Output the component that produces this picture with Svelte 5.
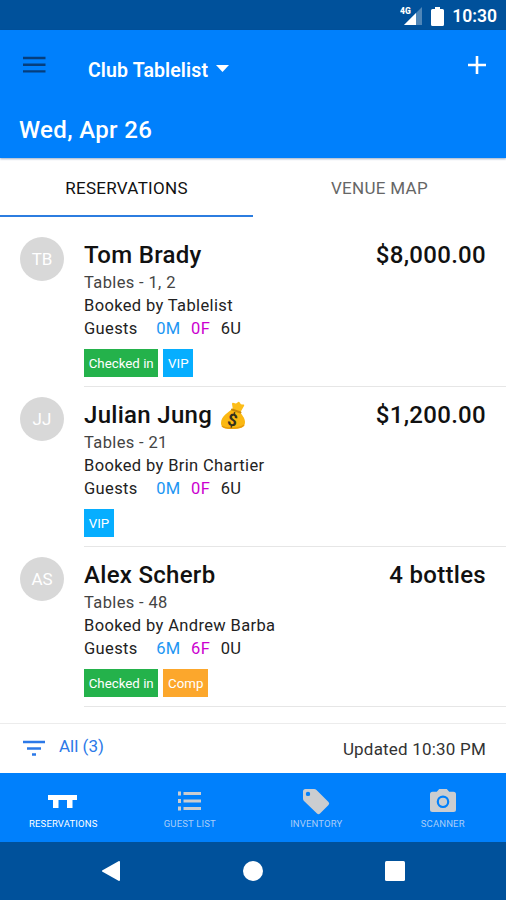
<script lang="ts">
    type Tag = { label: string; kind: string };
    type Reservation = {
        initials: string;
        name: string;
        bonus?: boolean;
        tables: string;
        bookedBy: string;
        guests: { m: number; f: number; u: number };
        amount: string;
        tags: Tag[];
    };

    const checkedIn: Tag = { label: 'Checked in', kind: 'checked' };
    const vip: Tag = { label: 'VIP', kind: 'vip' };
    const comp: Tag = { label: 'Comp', kind: 'comp' };

    const reservations: Reservation[] = [
        {
            initials: 'TB',
            name: 'Tom Brady',
            tables: '1, 2',
            bookedBy: 'Tablelist',
            guests: { m: 0, f: 0, u: 6 },
            amount: '$8,000.00',
            tags: [checkedIn, vip]
        },
        {
            initials: 'JJ',
            name: 'Julian Jung',
            bonus: true,
            tables: '21',
            bookedBy: 'Brin Chartier',
            guests: { m: 0, f: 0, u: 6 },
            amount: '$1,200.00',
            tags: [vip]
        },
        {
            initials: 'AS',
            name: 'Alex Scherb',
            tables: '48',
            bookedBy: 'Andrew Barba',
            guests: { m: 6, f: 6, u: 0 },
            amount: '4 bottles',
            tags: [checkedIn, comp]
        }
    ];

    const tabs = ['RESERVATIONS', 'VENUE MAP'];
    const sections = ['RESERVATIONS', 'GUEST LIST', 'INVENTORY', 'SCANNER'];

    let activeTab = $state(0);
    let activeSection = $state(0);
</script>

<div class="screen">
    <div class="status-bar">
        <svg class="signal" width="23" height="20" viewBox="0 0 23 20">
            <path d="M22 1V19H4Z" fill="#4f86b8" />
            <path d="M16 7V19H4Z" fill="#fff" />
            <text x="0" y="8" class="network">4G</text>
        </svg>
        <svg class="battery" width="13" height="19" viewBox="0 0 13 19">
            <path d="M4 0H9V2H11.5Q13 2 13 3.5V17.5Q13 19 11.5 19H1.5Q0 19 0 17.5V3.5Q0 2 1.5 2H4Z" fill="#fff" />
        </svg>
        <span class="clock">10:30</span>
    </div>

    <header>
        <div class="toolbar">
            <button class="menu" aria-label="Menu">
                <svg width="24" height="18" viewBox="0 0 24 18">
                    <path d="M1 2H23.5M1 8.7H23.5M1 15.4H23.5" stroke="#063e7c" stroke-width="2.4" />
                </svg>
            </button>
            <button class="venue">
                <span>Club Tablelist</span>
                <svg width="13" height="7" viewBox="0 0 13 7">
                    <path d="M0 0H13L6.5 7Z" fill="#fff" />
                </svg>
            </button>
            <button class="add" aria-label="Add reservation">
                <svg width="18" height="18" viewBox="0 0 18 18">
                    <path d="M9 0V18M0 9H18" stroke="#fff" stroke-width="2.6" />
                </svg>
            </button>
        </div>
        <div class="date">Wed, Apr 26</div>
    </header>

    <nav class="tabs">
        {#each tabs as tab, i}
            <button class:active={activeTab === i} onclick={() => (activeTab = i)}>{tab}</button>
        {/each}
    </nav>

    <main>
        {#each reservations as r}
            <article>
                <div class="avatar">{r.initials}</div>
                <div class="body">
                    <div class="title">
                        <h2>{r.name}</h2>
                        {#if r.bonus}
                            <!-- Money bag -->
                            <svg width="26" height="29" viewBox="0 0 26 29">
                                <path d="M13 9L12 3Q12 1 14 2Q16 3 17.5 1.5Q19 0 20 2Q21 4 23 3.5Q25 3 24 5L20 12Z" fill="#fcbd19" />
                                <path d="M12 8C9 11 1 15 1 22C1 27 5 28 12 28C20 28 25 27 25 21C25 17 22 14 20 11Z" fill="#fbb812" />
                                <path d="M12 8.5L20.5 11.5" stroke="#c98a08" stroke-width="2" stroke-linecap="round" />
                                <path d="M2 25C5 28 20 28 24 24" fill="none" stroke="#e79a0b" stroke-width="1.5" />
                                <text x="12.5" y="25" text-anchor="middle" class="dollar" transform="rotate(12 12.5 19)">$</text>
                            </svg>
                        {/if}
                        <span class="amount">{r.amount}</span>
                    </div>
                    <p class="tables">Tables - {r.tables}</p>
                    <p>Booked by {r.bookedBy}</p>
                    <p class="guests">
                        <span class="label">Guests</span>
                        <span class="male">{r.guests.m}M</span>
                        <span class="female">{r.guests.f}F</span>
                        <span>{r.guests.u}U</span>
                    </p>
                    <div class="tags">
                        {#each r.tags as tag}
                            <span class="tag {tag.kind}">{tag.label}</span>
                        {/each}
                    </div>
                </div>
            </article>
        {/each}
    </main>

    <div class="filter-bar">
        <button class="filter">
            <svg width="24" height="17" viewBox="0 0 24 17">
                <path d="M1 2H23M5 8.5H19M10 14.5H14" stroke="#2c79e8" stroke-width="2.4" />
            </svg>
            <span>All (3)</span>
        </button>
        <span class="updated">Updated 10:30 PM</span>
    </div>

    <nav class="sections">
        {#each sections as section, i}
            <button class:active={activeSection === i} onclick={() => (activeSection = i)}>
                <svg width="30" height="28" viewBox="0 0 30 28" fill="currentColor">
                    {#if i === 0}
                        <path d="M0 8H29V13H24.5V21H19V13H10.5V21H5V13H0Z" />
                    {:else if i === 1}
                        <path d="M3 4.5H6V8.5H3ZM8.5 5H26V8H8.5ZM3 12H6V16H3ZM8.5 12.5H26V15.5H8.5ZM3 19.5H6V23.5H3ZM8.5 20H26V23H8.5Z" />
                    {:else if i === 2}
                        <path fill-rule="evenodd" d="M4.5 2H13Q14.5 2 15.5 3L27.5 15Q29 16.5 27.5 18L19 26.5Q17.5 28 16 26.5L3 14Q2 13 2 11.5V4.5Q2 2 4.5 2ZM7 4.7A2.2 2.2 0 1 0 7 9.1A2.2 2.2 0 1 0 7 4.7Z" />
                    {:else}
                        <path fill-rule="evenodd" d="M11.2 2H18.8L21.2 4.7H25.5Q28 4.7 28 7.2V22.5Q28 25 25.5 25H4.5Q2 25 2 22.5V7.2Q2 4.7 4.5 4.7H8.8ZM15 8.5A6.3 6.3 0 1 0 15 21.1A6.3 6.3 0 1 0 15 8.5ZM15 10.7A4.1 4.1 0 1 1 15 18.9A4.1 4.1 0 1 1 15 10.7Z" />
                    {/if}
                </svg>
                <span>{section}</span>
            </button>
        {/each}
    </nav>

    <div class="system-nav">
        <svg width="20" height="20" viewBox="0 0 20 20">
            <path d="M18 1V19L2 10Z" fill="#fff" stroke="#fff" stroke-width="2" stroke-linejoin="round" />
        </svg>
        <svg width="20" height="20" viewBox="0 0 20 20">
            <circle cx="10" cy="10" r="10" fill="#fff" />
        </svg>
        <svg width="20" height="20" viewBox="0 0 20 20">
            <rect width="20" height="20" rx="1.5" fill="#fff" />
        </svg>
    </div>
</div>

<style>
    :global(body) {
        margin: 0;
        background: #fff;
    }

    .screen {
        display: flex;
        flex-direction: column;
        box-sizing: border-box;
        width: 506px;
        height: 900px;
        overflow: hidden;
        background: #fff;
        color: #111;
        font-family: Roboto, 'Liberation Sans', sans-serif;
    }

    svg {
        display: block;
        flex-shrink: 0;
    }

    button {
        padding: 0;
        border: 0;
        background: none;
        color: inherit;
        font: inherit;
        letter-spacing: inherit;
    }

    .status-bar {
        display: flex;
        align-items: center;
        justify-content: flex-end;
        box-sizing: border-box;
        height: 30px;
        padding: 2px 9px 0 0;
        background: #00519b;
        color: #fff;
    }

    .network {
        fill: #fff;
        font-size: 8.5px;
        font-weight: 900;
    }

    .battery {
        margin: 0 8px 0 8px;
    }

    .clock {
        font-size: 17.5px;
        font-weight: 600;
    }

    header {
        position: relative;
        box-sizing: border-box;
        height: 128px;
        padding: 18px 20px 0;
        background: #0080fc;
        box-shadow: 0 1px 2px rgba(0, 50, 110, 0.4);
        color: #fff;
    }

    .toolbar {
        display: flex;
        align-items: center;
        height: 34px;
    }

    .menu {
        padding-left: 2px;
    }

    .venue {
        display: flex;
        align-items: center;
        gap: 8px;
        margin: 11px 0 0 42px;
        font-size: 19.5px;
        font-weight: 600;
        letter-spacing: 0.12px;
        line-height: 24px;
    }

    .venue svg {
        margin-top: -5px;
    }

    .add {
        margin-left: auto;
    }

    .date {
        margin: 33px 0 0 -1px;
        font-size: 24px;
        font-weight: 500;
        letter-spacing: 0.35px;
        line-height: 30px;
    }

    .tabs {
        display: flex;
        height: 59px;
    }

    .tabs button {
        flex: 1;
        padding-top: 3px;
        border-bottom: 2px solid transparent;
        color: #666;
        font-size: 17px;
        letter-spacing: 0.3px;
    }

    .tabs button.active {
        border-color: #2c7de0;
        color: #111;
    }

    main {
        height: 506px;
        padding-top: 10px;
        box-sizing: border-box;
    }

    article {
        display: flex;
        height: 160px;
    }

    .avatar {
        flex-shrink: 0;
        width: 44px;
        height: 44px;
        margin: 10px 20px 0;
        border-radius: 50%;
        background: #d8d8d8;
        color: #fff;
        font-size: 17px;
        line-height: 45px;
        text-align: center;
    }

    .body {
        flex: 1;
        box-sizing: border-box;
        height: 160px;
        padding: 12px 20px 0 0;
        border-bottom: 1px solid #e6e6e6;
    }

    .title {
        display: flex;
        align-items: center;
        height: 32px;
    }

    h2,
    .amount {
        margin: 0;
        font-size: 24px;
        font-weight: 500;
        letter-spacing: 0.3px;
        line-height: 32px;
    }

    .title svg {
        margin-left: 8px;
    }

    .dollar {
        fill: #33301f;
        font-size: 17px;
        font-weight: 700;
    }

    .amount {
        margin-left: auto;
    }

    p {
        margin: 0;
        color: #222;
        font-size: 16.5px;
        letter-spacing: 0.36px;
        line-height: 23px;
    }

    .tables {
        color: #444;
    }

    .guests {
        display: flex;
        gap: 10.5px;
    }

    .label {
        margin-right: 8px;
    }

    .male {
        color: #2196f3;
    }

    .female {
        color: #cc00d0;
    }

    .tags {
        display: flex;
        gap: 5px;
        margin-top: 9px;
    }

    .tag {
        height: 28px;
        padding: 0 4.7px;
        color: #fff;
        font-size: 13.3px;
        line-height: 30px;
    }

    .checked {
        background: #24b24b;
    }

    .vip {
        background: #06aeff;
    }

    .comp {
        background: #fca72c;
    }

    .filter-bar {
        display: flex;
        align-items: center;
        justify-content: space-between;
        box-sizing: border-box;
        height: 50px;
        padding: 0 20px 0 22px;
        border-top: 1px solid #ececec;
    }

    .filter {
        display: flex;
        align-items: center;
        gap: 13px;
        color: #2c79e8;
        font-size: 17px;
        line-height: 20px;
    }

    .filter span {
        margin-top: -5px;
    }

    .updated {
        margin-top: 1px;
        color: #333;
        font-size: 17px;
        letter-spacing: 0.2px;
    }

    .sections {
        display: flex;
        height: 69px;
        background: #0080fc;
    }

    .sections button {
        display: flex;
        flex: 1;
        flex-direction: column;
        align-items: center;
        padding-top: 14px;
        color: #cbcdd0;
        font-size: 9.5px;
    }

    .sections span {
        margin-top: 3px;
        color: #a9cdf8;
        letter-spacing: 0.15px;
        line-height: 12px;
    }

    .sections .active,
    .sections .active span {
        color: #fff;
    }

    .system-nav {
        display: flex;
        align-items: center;
        justify-content: center;
        gap: 122px;
        height: 58px;
        background: #00519b;
    }
</style>
